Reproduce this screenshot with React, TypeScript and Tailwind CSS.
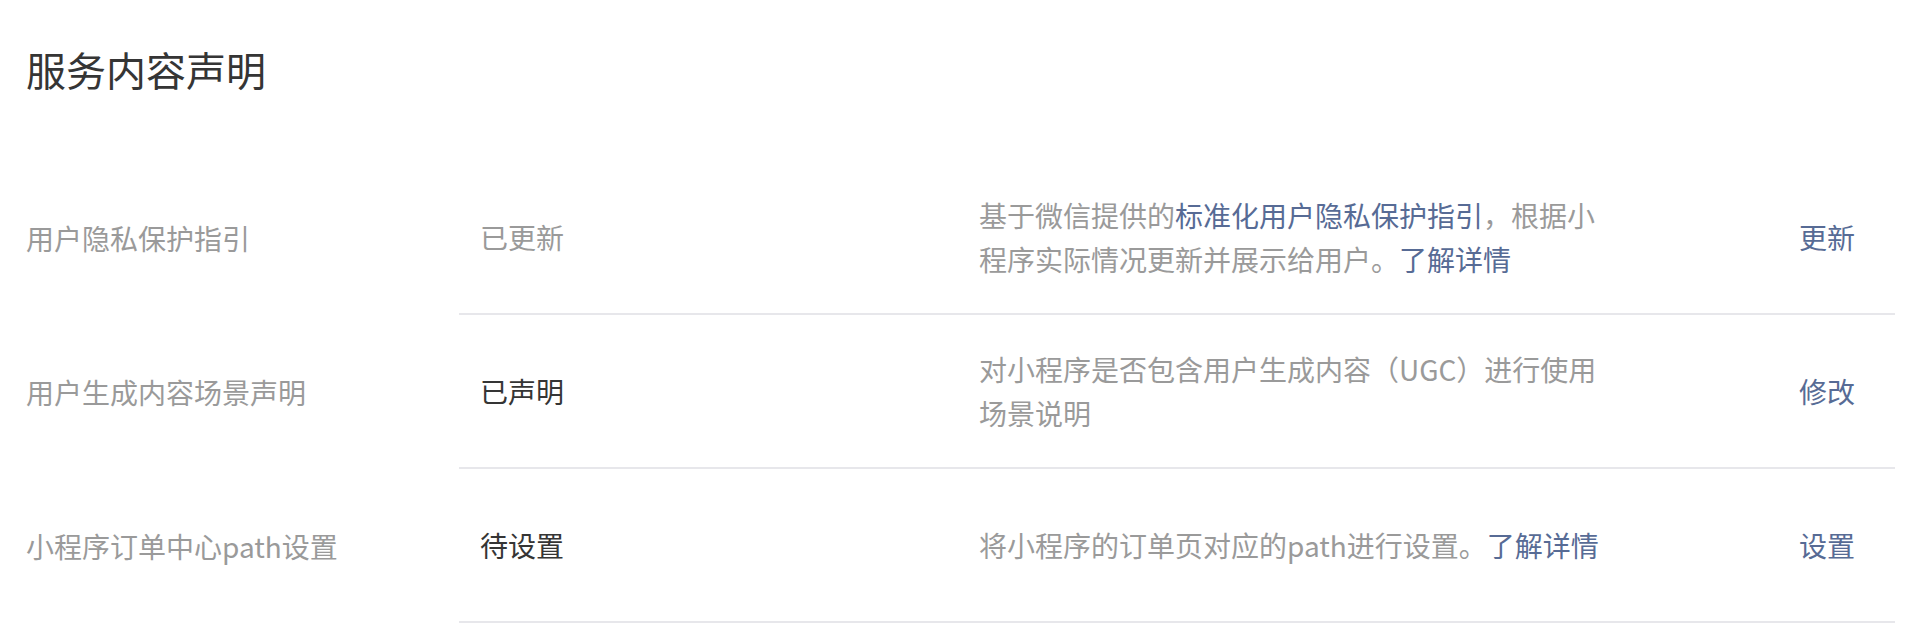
import React from 'react';

interface Row {
  label: string;
  status: string;
  done: boolean;
  desc: React.ReactNode;
  action: string;
}

const link = 'text-[#576b95]';

const rows: Row[] = [
  {
    label: '用户隐私保护指引',
    status: '已更新',
    done: true,
    desc: (
      <>
        基于微信提供的<span className={link}>标准化用户隐私保护指引</span>，根据小程序实际情况更新并展示给用户。
        <span className={link}>了解详情</span>
      </>
    ),
    action: '更新',
  },
  {
    label: '用户生成内容场景声明',
    status: '已声明',
    done: false,
    desc: <>对小程序是否包含用户生成内容（UGC）进行使用场景说明</>,
    action: '修改',
  },
  {
    label: '小程序订单中心path设置',
    status: '待设置',
    done: false,
    desc: (
      <>
        将小程序的订单页对应的path进行设置。<span className={link}>了解详情</span>
      </>
    ),
    action: '设置',
  },
];

export default function App() {
  return (
    <div className="w-[1930px] h-[636px] bg-white pl-[26px] pr-[35px] font-['Noto_Sans_CJK_SC',sans-serif]">
      <h2 className="pt-[41px] text-[40px] leading-[56px] font-normal text-[#353535]">服务内容声明</h2>

      <div className="mt-[64px]">
        {rows.map((row) => (
          <div key={row.label} className="flex">
            <div className="w-[433px] flex items-center text-[28px] text-[#9a9a9a]">{row.label}</div>
            <div className="flex-1 h-[154px] flex items-center border-b-2 border-[#e7e7eb] pl-[21px] text-[28px]">
              <div className={`w-[499px] ${row.done ? 'text-[#9a9a9a]' : 'text-[#353535]'}`}>{row.status}</div>
              <div className="w-[820px]">
                <p className="w-[630px] leading-[44px] text-[#9a9a9a]">{row.desc}</p>
              </div>
              <div className={`w-[96px] ${link}`}>{row.action}</div>
            </div>
          </div>
        ))}
      </div>
    </div>
  );
}
